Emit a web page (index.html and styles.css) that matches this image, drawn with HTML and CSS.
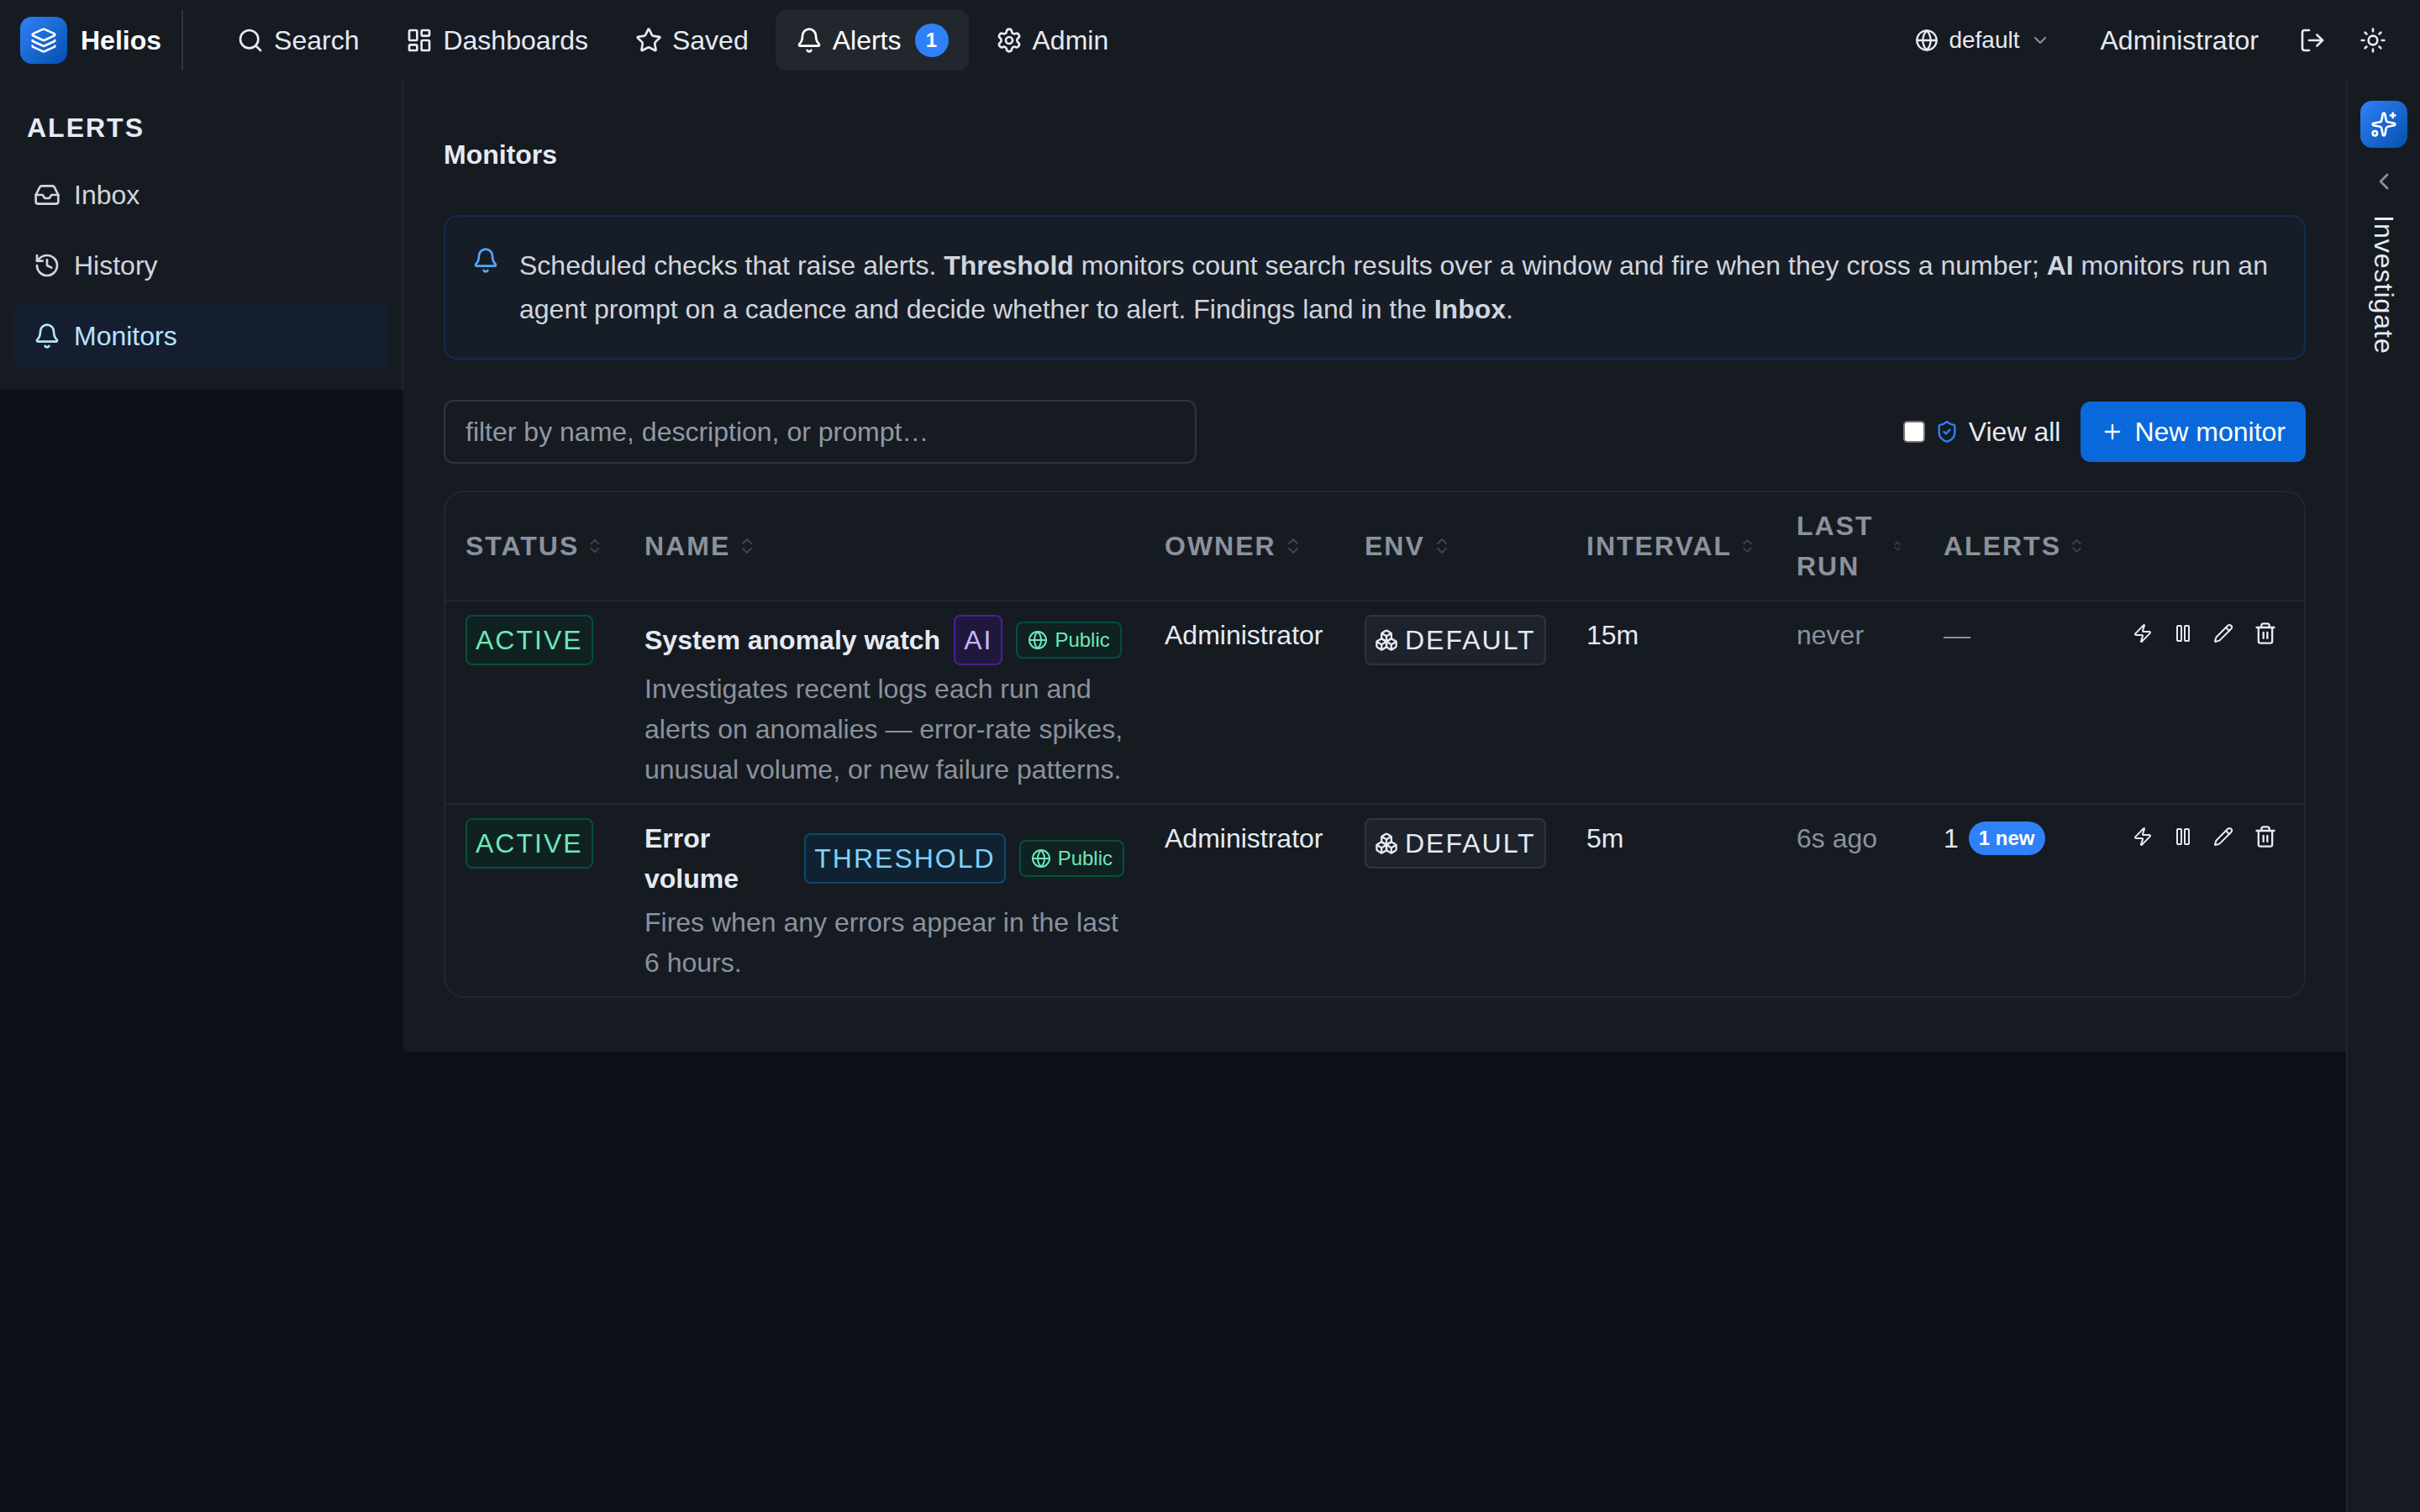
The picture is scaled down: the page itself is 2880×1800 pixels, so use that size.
FILE: index.html
```html
<!DOCTYPE html>
<html lang="en">
<head>
    <meta charset="UTF-8">
    <meta name="viewport" content="width=device-width, initial-scale=1.0">
    <title>Helios - Monitors</title>
    <link rel="stylesheet" href="styles.css">
</head>
<body>
    <!-- icon sprite -->
    <svg class="sprite" aria-hidden="true">
        <symbol id="i-layers" viewBox="0 0 24 24">
            <path d="M12.83 2.18a2 2 0 0 0-1.66 0L2.6 6.08a1 1 0 0 0 0 1.83l8.58 3.91a2 2 0 0 0 1.66 0l8.58-3.9a1 1 0 0 0 0-1.83z"/>
            <path d="M2 12a1 1 0 0 0 .58.91l8.6 3.91a2 2 0 0 0 1.65 0l8.58-3.9A1 1 0 0 0 22 12"/>
            <path d="M2 17a1 1 0 0 0 .58.91l8.6 3.91a2 2 0 0 0 1.65 0l8.58-3.9A1 1 0 0 0 22 17"/>
        </symbol>
        <symbol id="i-search" viewBox="0 0 24 24">
            <circle cx="11" cy="11" r="8"/>
            <path d="m21 21-4.3-4.3"/>
        </symbol>
        <symbol id="i-dashboard" viewBox="0 0 24 24">
            <rect width="7" height="9" x="3" y="3" rx="1"/>
            <rect width="7" height="5" x="14" y="3" rx="1"/>
            <rect width="7" height="9" x="14" y="12" rx="1"/>
            <rect width="7" height="5" x="3" y="16" rx="1"/>
        </symbol>
        <symbol id="i-star" viewBox="0 0 24 24">
            <path d="M11.525 2.295a.53.53 0 0 1 .95 0l2.31 4.679a2.123 2.123 0 0 0 1.595 1.16l5.166.756a.53.53 0 0 1 .294.904l-3.736 3.638a2.123 2.123 0 0 0-.611 1.878l.882 5.14a.53.53 0 0 1-.771.56l-4.618-2.428a2.122 2.122 0 0 0-1.973 0L6.396 21.01a.53.53 0 0 1-.77-.56l.881-5.139a2.122 2.122 0 0 0-.611-1.879L2.16 9.795a.53.53 0 0 1 .294-.906l5.165-.755a2.122 2.122 0 0 0 1.597-1.16z"/>
        </symbol>
        <symbol id="i-bell" viewBox="0 0 24 24">
            <path d="M10.268 21a2 2 0 0 0 3.464 0"/>
            <path d="M3.262 15.326A1 1 0 0 0 4 17h16a1 1 0 0 0 .74-1.673C19.41 13.956 18 12.499 18 8A6 6 0 0 0 6 8c0 4.499-1.411 5.956-2.738 7.326"/>
        </symbol>
        <symbol id="i-settings" viewBox="0 0 24 24">
            <path d="M9.671 4.136a2.34 2.34 0 0 1 4.659 0 2.34 2.34 0 0 0 3.319 1.915 2.34 2.34 0 0 1 2.33 4.033 2.34 2.34 0 0 0 0 3.831 2.34 2.34 0 0 1-2.33 4.033 2.34 2.34 0 0 0-3.319 1.915 2.34 2.34 0 0 1-4.659 0 2.34 2.34 0 0 0-3.32-1.915 2.34 2.34 0 0 1-2.33-4.033 2.34 2.34 0 0 0 0-3.831A2.34 2.34 0 0 1 6.35 6.051a2.34 2.34 0 0 0 3.319-1.915"/>
            <circle cx="12" cy="12" r="3"/>
        </symbol>
        <symbol id="i-globe" viewBox="0 0 24 24">
            <circle cx="12" cy="12" r="10"/>
            <path d="M12 2a14.5 14.5 0 0 0 0 20 14.5 14.5 0 0 0 0-20"/>
            <path d="M2 12h20"/>
        </symbol>
        <symbol id="i-chevron-down" viewBox="0 0 24 24">
            <path d="m6 9 6 6 6-6"/>
        </symbol>
        <symbol id="i-chevron-left" viewBox="0 0 24 24">
            <path d="m15 18-6-6 6-6"/>
        </symbol>
        <symbol id="i-logout" viewBox="0 0 24 24">
            <path d="m16 17 5-5-5-5"/>
            <path d="M21 12H9"/>
            <path d="M9 21H5a2 2 0 0 1-2-2V5a2 2 0 0 1 2-2h4"/>
        </symbol>
        <symbol id="i-sun" viewBox="0 0 24 24">
            <circle cx="12" cy="12" r="4"/>
            <path d="M12 2v2M12 20v2M4.93 4.93l1.41 1.41M17.66 17.66l1.41 1.41M2 12h2M20 12h2M6.34 17.66l-1.41 1.41M19.07 4.93l-1.41 1.41"/>
        </symbol>
        <symbol id="i-inbox" viewBox="0 0 24 24">
            <path d="M22 12h-6l-2 3h-4l-2-3H2"/>
            <path d="M5.45 5.11 2 12v6a2 2 0 0 0 2 2h16a2 2 0 0 0 2-2v-6l-3.45-6.89A2 2 0 0 0 16.76 4H7.24a2 2 0 0 0-1.79 1.11z"/>
        </symbol>
        <symbol id="i-history" viewBox="0 0 24 24">
            <path d="M3 12a9 9 0 1 0 9-9 9.75 9.75 0 0 0-6.74 2.74L3 8"/>
            <path d="M3 3v5h5"/>
            <path d="M12 7v5l4 2"/>
        </symbol>
        <symbol id="i-sparkles" viewBox="0 0 24 24">
            <path d="M11.017 2.814a1 1 0 0 1 1.966 0l1.051 5.558a2 2 0 0 0 1.594 1.594l5.558 1.051a1 1 0 0 1 0 1.966l-5.558 1.051a2 2 0 0 0-1.594 1.594l-1.051 5.558a1 1 0 0 1-1.966 0l-1.051-5.558a2 2 0 0 0-1.594-1.594l-5.558-1.051a1 1 0 0 1 0-1.966l5.558-1.051a2 2 0 0 0 1.594-1.594z"/>
            <path d="M20 2v4M22 4h-4"/>
            <circle cx="4" cy="20" r="2"/>
        </symbol>
        <symbol id="i-shield" viewBox="0 0 24 24">
            <path d="M20 13c0 5-3.5 7.5-7.66 8.95a1 1 0 0 1-.67-.01C7.5 20.5 4 18 4 13V6a1 1 0 0 1 1-1c2 0 4.5-1.2 6.24-2.72a1.17 1.17 0 0 1 1.52 0C14.51 3.81 17 5 19 5a1 1 0 0 1 1 1z"/>
            <path d="m9 12 2 2 4-4"/>
        </symbol>
        <symbol id="i-plus" viewBox="0 0 24 24">
            <path d="M5 12h14M12 5v14"/>
        </symbol>
        <symbol id="i-sort" viewBox="0 0 24 24">
            <path d="m7 15 5 5 5-5"/>
            <path d="m7 9 5-5 5 5"/>
        </symbol>
        <symbol id="i-boxes" viewBox="0 0 24 24">
            <path d="M2.97 12.92A2 2 0 0 0 2 14.63v3.24a2 2 0 0 0 .97 1.71l3 1.8a2 2 0 0 0 2.06 0L12 19v-5.5l-5-3-4.03 2.42Z"/>
            <path d="m7 16.5-4.74-2.85M7 16.5l5-3M7 16.5v5.17"/>
            <path d="M12 13.5V19l3.97 2.38a2 2 0 0 0 2.06 0l3-1.8a2 2 0 0 0 .97-1.71v-3.24a2 2 0 0 0-.97-1.71L17 10.5l-5 3Z"/>
            <path d="m17 16.5-5-3M17 16.5l4.74-2.85M17 16.5v5.17"/>
            <path d="M7.97 4.42A2 2 0 0 0 7 6.13v4.37l5 3 5-3V6.13a2 2 0 0 0-.97-1.71l-3-1.8a2 2 0 0 0-2.06 0l-3 1.8Z"/>
            <path d="M12 8 7.26 5.15M12 8l4.74-2.85M12 13.5V8"/>
        </symbol>
        <symbol id="i-zap" viewBox="0 0 24 24">
            <path d="M4 14a1 1 0 0 1-.78-1.63l9.9-10.2a.5.5 0 0 1 .86.46l-1.92 6.02A1 1 0 0 0 13 10h7a1 1 0 0 1 .78 1.63l-9.9 10.2a.5.5 0 0 1-.86-.46l1.92-6.02A1 1 0 0 0 11 14z"/>
        </symbol>
        <symbol id="i-pause" viewBox="0 0 24 24">
            <rect x="14" y="3" width="5" height="18" rx="1"/>
            <rect x="5" y="3" width="5" height="18" rx="1"/>
        </symbol>
        <symbol id="i-pencil" viewBox="0 0 24 24">
            <path d="M21.174 6.812a1 1 0 0 0-3.986-3.987L3.842 16.174a2 2 0 0 0-.5.83l-1.321 4.352a.5.5 0 0 0 .623.622l4.353-1.32a2 2 0 0 0 .83-.497z"/>
            <path d="m15 5 4 4"/>
        </symbol>
        <symbol id="i-trash" viewBox="0 0 24 24">
            <path d="M10 11v6M14 11v6"/>
            <path d="M19 6v14a2 2 0 0 1-2 2H7a2 2 0 0 1-2-2V6"/>
            <path d="M3 6h18"/>
            <path d="M8 6V4a2 2 0 0 1 2-2h4a2 2 0 0 1 2 2v2"/>
        </symbol>
    </svg>

    <header class="topbar">
        <a class="brand" href="#">
            <span class="logo"><svg class="icon"><use href="#i-layers"/></svg></span>
            Helios
        </a>
        <nav class="nav">
            <a class="nav-link" href="#search"><svg class="icon"><use href="#i-search"/></svg>Search</a>
            <a class="nav-link" href="#dashboards"><svg class="icon"><use href="#i-dashboard"/></svg>Dashboards</a>
            <a class="nav-link" href="#saved"><svg class="icon"><use href="#i-star"/></svg>Saved</a>
            <a class="nav-link active" href="#alerts"><svg class="icon"><use href="#i-bell"/></svg>Alerts <span class="count">1</span></a>
            <a class="nav-link" href="#admin"><svg class="icon"><use href="#i-settings"/></svg>Admin</a>
        </nav>
        <div class="topbar-right">
            <button type="button" class="env-button">
                <svg class="icon icon-md"><use href="#i-globe"/></svg>
                default
                <svg class="icon icon-sm muted"><use href="#i-chevron-down"/></svg>
            </button>
            <a class="user-link" href="#profile">Administrator</a>
            <button type="button" class="icon-button" aria-label="Sign out"><svg class="icon"><use href="#i-logout"/></svg></button>
            <button type="button" class="icon-button" aria-label="Toggle theme"><svg class="icon"><use href="#i-sun"/></svg></button>
        </div>
    </header>

    <div class="layout">
        <aside class="sidebar">
            <h2 class="sidebar-title">Alerts</h2>
            <nav class="side-nav">
                <a class="side-link" href="#inbox"><svg class="icon"><use href="#i-inbox"/></svg>Inbox</a>
                <a class="side-link" href="#history"><svg class="icon"><use href="#i-history"/></svg>History</a>
                <a class="side-link active" href="#monitors"><svg class="icon"><use href="#i-bell"/></svg>Monitors</a>
            </nav>
        </aside>

        <main class="content">
            <div class="page-header">
                <h1>Monitors</h1>
            </div>

            <div class="info">
                <svg class="icon"><use href="#i-bell"/></svg>
                <p>Scheduled checks that raise alerts. <strong>Threshold</strong> monitors count search results over a window and fire when they cross a number; <strong>AI</strong> monitors run an agent prompt on a cadence and decide whether to alert. Findings land in the <strong>Inbox</strong>.</p>
            </div>

            <div class="toolbar">
                <input type="text" class="filter" placeholder="filter by name, description, or prompt…" aria-label="Filter monitors">
                <div class="toolbar-right">
                    <label class="view-all">
                        <input type="checkbox" id="viewAll">
                        <svg class="icon icon-md"><use href="#i-shield"/></svg>
                        View all
                    </label>
                    <button type="button" class="primary"><svg class="icon icon-md"><use href="#i-plus"/></svg>New monitor</button>
                </div>
            </div>

            <div class="table-card">
                <table>
                    <colgroup>
                        <col class="col-status">
                        <col>
                        <col class="col-owner">
                        <col class="col-env">
                        <col class="col-interval">
                        <col class="col-last">
                        <col class="col-alerts">
                        <col class="col-actions">
                    </colgroup>
                    <thead>
                        <tr>
                            <th><button type="button" class="sort">Status<svg class="icon icon-sm"><use href="#i-sort"/></svg></button></th>
                            <th><button type="button" class="sort">Name<svg class="icon icon-sm"><use href="#i-sort"/></svg></button></th>
                            <th><button type="button" class="sort">Owner<svg class="icon icon-sm"><use href="#i-sort"/></svg></button></th>
                            <th><button type="button" class="sort">Env<svg class="icon icon-sm"><use href="#i-sort"/></svg></button></th>
                            <th><button type="button" class="sort">Interval<svg class="icon icon-sm"><use href="#i-sort"/></svg></button></th>
                            <th><button type="button" class="sort">Last run<svg class="icon icon-sm"><use href="#i-sort"/></svg></button></th>
                            <th><button type="button" class="sort">Alerts<svg class="icon icon-sm"><use href="#i-sort"/></svg></button></th>
                            <th></th>
                        </tr>
                    </thead>
                    <tbody>
                        <tr>
                            <td><span class="badge badge-green">Active</span></td>
                            <td>
                                <div class="name-row">
                                    <strong>System anomaly watch</strong>
                                    <span class="badge badge-purple">AI</span>
                                    <span class="pill"><svg class="icon icon-sm"><use href="#i-globe"/></svg>Public</span>
                                </div>
                                <p class="desc">Investigates recent logs each run and alerts on anomalies — error-rate spikes, unusual volume, or new failure patterns.</p>
                            </td>
                            <td>Administrator</td>
                            <td><span class="badge badge-gray"><svg class="icon icon-md"><use href="#i-boxes"/></svg>Default</span></td>
                            <td>15m</td>
                            <td class="muted">never</td>
                            <td class="muted">—</td>
                            <td>
                                <div class="actions">
                                    <button type="button" aria-label="Run now"><svg class="icon icon-sm"><use href="#i-zap"/></svg></button>
                                    <button type="button" aria-label="Pause"><svg class="icon icon-sm"><use href="#i-pause"/></svg></button>
                                    <button type="button" aria-label="Edit"><svg class="icon icon-sm"><use href="#i-pencil"/></svg></button>
                                    <button type="button" aria-label="Delete"><svg class="icon icon-md"><use href="#i-trash"/></svg></button>
                                </div>
                            </td>
                        </tr>
                        <tr>
                            <td><span class="badge badge-green">Active</span></td>
                            <td>
                                <div class="name-row">
                                    <strong>Error volume</strong>
                                    <span class="badge badge-blue">Threshold</span>
                                    <span class="pill"><svg class="icon icon-sm"><use href="#i-globe"/></svg>Public</span>
                                </div>
                                <p class="desc">Fires when any errors appear in the last 6 hours.</p>
                            </td>
                            <td>Administrator</td>
                            <td><span class="badge badge-gray"><svg class="icon icon-md"><use href="#i-boxes"/></svg>Default</span></td>
                            <td>5m</td>
                            <td class="muted">6s ago</td>
                            <td><div class="alert-count">1 <span class="count">1 new</span></div></td>
                            <td>
                                <div class="actions">
                                    <button type="button" aria-label="Run now"><svg class="icon icon-sm"><use href="#i-zap"/></svg></button>
                                    <button type="button" aria-label="Pause"><svg class="icon icon-sm"><use href="#i-pause"/></svg></button>
                                    <button type="button" aria-label="Edit"><svg class="icon icon-sm"><use href="#i-pencil"/></svg></button>
                                    <button type="button" aria-label="Delete"><svg class="icon icon-md"><use href="#i-trash"/></svg></button>
                                </div>
                            </td>
                        </tr>
                    </tbody>
                </table>
            </div>
        </main>

        <aside class="rail">
            <button type="button" class="logo" aria-label="Open assistant"><svg class="icon"><use href="#i-sparkles"/></svg></button>
            <svg class="icon muted"><use href="#i-chevron-left"/></svg>
            <span class="rail-label">Investigate</span>
        </aside>
    </div>
</body>
</html>
```
FILE: styles.css
```css
* {
    box-sizing: border-box;
}
body {
    margin: 0;
    min-height: 100vh;
    display: flex;
    flex-direction: column;
    background-color: #0d1017;
    color: #e6eaf2;
    font-family: "Liberation Sans", Arial, sans-serif;
    font-size: 32px;
    line-height: 48px;
}
a {
    color: inherit;
    text-decoration: none;
}
button {
    padding: 0;
    border: none;
    background: none;
    color: inherit;
    font: inherit;
    cursor: pointer;
}
h1, h2, p {
    margin: 0;
    font-size: 32px;
}
.sprite {
    display: none;
}
.icon {
    width: 32px;
    height: 32px;
    flex-shrink: 0;
    display: block;
    fill: none;
    stroke: currentColor;
    stroke-width: 2;
    stroke-linecap: round;
    stroke-linejoin: round;
}
.icon-md {
    width: 28px;
    height: 28px;
}
.icon-sm {
    width: 24px;
    height: 24px;
}
.muted {
    color: #8b919d;
}

/* top bar */
.topbar {
    display: flex;
    align-items: center;
    padding: 12px 24px;
    background-color: #161b22;
}
.brand {
    display: flex;
    align-items: center;
    gap: 16px;
    height: 72px;
    padding-right: 24px;
    border-right: 2px solid #30363d;
    color: #fff;
    font-weight: bold;
}
.logo {
    display: flex;
    align-items: center;
    justify-content: center;
    width: 56px;
    height: 56px;
    border-radius: 14px;
    background: linear-gradient(135deg, #2f81f7, #0550ae);
    color: #fff;
}
.nav {
    display: flex;
    gap: 8px;
    margin-left: 40px;
}
.nav-link {
    display: flex;
    align-items: center;
    gap: 12px;
    padding: 12px 24px;
    border-radius: 12px;
}
.nav-link.active {
    background-color: #22272e;
    color: #fff;
}
.count {
    min-width: 40px;
    padding: 0 12px;
    border-radius: 20px;
    background-color: #2f81f7;
    color: #fff;
    font-size: 24px;
    font-weight: bold;
    line-height: 40px;
    text-align: center;
}
.nav-link .count {
    margin-left: 4px;
}
.topbar-right {
    display: flex;
    align-items: center;
    gap: 8px;
    margin-left: auto;
}
.env-button {
    display: flex;
    align-items: center;
    gap: 12px;
    padding: 0 28px;
    font-size: 28px;
}
.user-link {
    padding: 0 24px;
}
.icon-button {
    padding: 16px;
}

/* layout */
.layout {
    display: flex;
    align-items: flex-start;
    flex: 1;
}
.sidebar {
    width: 480px;
    flex-shrink: 0;
    padding: 32px 16px 24px;
    border-right: 2px solid #21262d;
    background-color: #161b22;
}
.sidebar-title {
    padding: 0 16px 16px;
    letter-spacing: 2px;
    text-transform: uppercase;
}
.side-nav {
    display: flex;
    flex-direction: column;
    gap: 4px;
}
.side-link {
    display: flex;
    align-items: center;
    gap: 16px;
    padding: 16px 24px;
    border-radius: 12px;
    color: #d0d5de;
}
.side-link.active {
    background-color: #141e2e;
    color: #b6e3ff;
}
.content {
    flex: 1;
    min-width: 0;
    padding: 48px 48px 64px;
    background-color: #161b22;
}
.page-header {
    padding: 16px 0;
    margin-bottom: 32px;
}
.info {
    display: flex;
    gap: 24px;
    padding: 32px;
    margin-bottom: 48px;
    border: 2px solid #142a55;
    border-radius: 16px;
    background-color: #171d27;
    color: #d0d5de;
    line-height: 52px;
}
.info .icon {
    margin-top: 4px;
    color: #58a6ff;
}

/* toolbar */
.toolbar {
    display: flex;
    align-items: center;
    justify-content: space-between;
    gap: 24px;
    margin-bottom: 32px;
}
.filter {
    width: 896px;
    height: 76px;
    padding: 0 24px;
    border: 2px solid #30343e;
    border-radius: 12px;
    background-color: #161b22;
    color: inherit;
    font: inherit;
}
.filter::placeholder {
    color: #9198a4;
}
.toolbar-right {
    display: flex;
    align-items: center;
    gap: 24px;
}
.view-all {
    display: flex;
    align-items: center;
    gap: 12px;
}
.view-all input {
    appearance: none;
    width: 26px;
    height: 26px;
    margin: 0;
    border: 2px solid #767676;
    border-radius: 5px;
    background-color: #fff;
}
.view-all input:checked {
    background-color: #2f81f7;
}
.view-all .icon {
    color: #2f81f7;
}
.primary {
    display: flex;
    align-items: center;
    gap: 12px;
    padding: 12px 24px;
    border-radius: 12px;
    background-color: #0969da;
    color: #fff;
}

/* table */
.table-card {
    border: 2px solid #21262d;
    border-radius: 24px;
    overflow: hidden;
}
table {
    width: 100%;
    table-layout: fixed;
    border-collapse: separate;
    border-spacing: 0;
}
.col-status { width: 213px; }
.col-owner { width: 238px; }
.col-env { width: 264px; }
.col-interval { width: 250px; }
.col-last { width: 175px; }
.col-alerts { width: 217px; }
.col-actions { width: 236px; }
th, td {
    padding: 16px 24px;
    text-align: left;
    vertical-align: top;
}
th {
    border-bottom: 2px solid #21262d;
    vertical-align: middle;
}
tbody tr:not(:last-child) td {
    border-bottom: 2px solid #21262d;
}
.sort {
    display: flex;
    align-items: center;
    gap: 8px;
    max-width: 100%;
    color: #8b919d;
    font-weight: bold;
    letter-spacing: 2px;
    text-align: left;
    text-transform: uppercase;
}
.sort .icon {
    flex-shrink: 1;
    opacity: 0.35;
}
.badge {
    display: flex;
    align-items: center;
    gap: 8px;
    width: fit-content;
    padding: 4px 10px;
    border: 2px solid;
    border-radius: 8px;
    letter-spacing: 2px;
    text-transform: uppercase;
}
.badge-green, .pill {
    border-color: #064e3b;
    background-color: #0f2121;
    color: #6ee7b7;
}
.badge-purple {
    border-color: #4c1d95;
    background-color: #20183c;
    color: #c4b5fd;
}
.badge-blue {
    border-color: #0c4a6e;
    background-color: #102231;
    color: #7dd3fc;
}
.badge-gray {
    border-color: #30343e;
    background-color: #1e222a;
}
.pill {
    display: flex;
    align-items: center;
    gap: 8px;
    padding: 0 12px;
    border-width: 2px;
    border-style: solid;
    border-radius: 8px;
    font-size: 24px;
    line-height: 40px;
}
.name-row {
    display: flex;
    align-items: center;
    gap: 16px;
    margin-bottom: 4px;
}
.desc {
    color: #8b919d;
}
.alert-count {
    display: flex;
    align-items: center;
    gap: 12px;
}
.actions {
    display: flex;
    align-items: center;
    justify-content: flex-end;
    gap: 8px;
}
.actions button {
    padding: 8px;
}

/* right rail */
.rail {
    align-self: stretch;
    display: flex;
    flex-direction: column;
    align-items: center;
    gap: 24px;
    width: 88px;
    flex-shrink: 0;
    padding-top: 24px;
    border-left: 2px solid #21262d;
    background-color: #161b22;
}
.rail-label {
    writing-mode: vertical-rl;
    letter-spacing: 1px;
}
```
